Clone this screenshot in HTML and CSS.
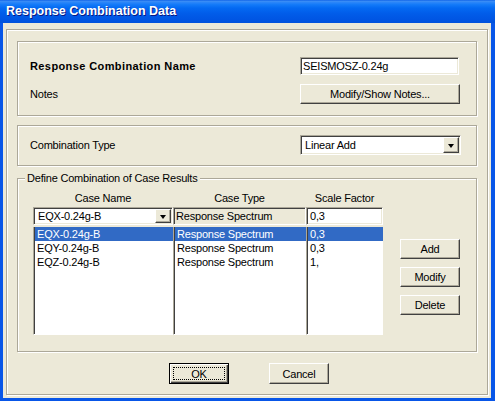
FILE: index.html
```html
<!DOCTYPE html>
<html>
<head>
    <meta charset="UTF-8">
    <title>Response Combination Data</title>
    <link rel="stylesheet" href="styles.css">
</head>
<body>
<div class="window">
    <div class="titlebar">Response Combination Data</div>
    <div class="client">
        <div class="frame">

            <!-- name + notes -->
            <div class="group group_name">
                <div class="row">
                    <span class="label bold">Response Combination Name</span>
                    <div class="field name_field">SEISMOSZ-0.24g</div>
                </div>
                <div class="row">
                    <span class="label">Notes</span>
                    <button class="btn notes_btn">Modify/Show Notes...</button>
                </div>
            </div>

            <!-- combination type -->
            <div class="group group_type">
                <div class="row">
                    <span class="label">Combination Type</span>
                    <div class="field combo type_combo">
                        <span class="combo_text">Linear Add</span>
                        <span class="arrow_btn"><span class="arrow"></span></span>
                    </div>
                </div>
            </div>

            <!-- case results -->
            <div class="group group_cases">
                <div class="legend">Define Combination of Case Results</div>
                <div class="cases_body">
                    <div class="case_table">
                        <div class="head">Case Name</div>
                        <div class="head">Case Type</div>
                        <div class="head">Scale Factor</div>

                        <div class="field combo case_combo">
                            <span class="combo_text">EQX-0.24g-B</span>
                            <span class="arrow_btn"><span class="arrow"></span></span>
                        </div>
                        <div class="field readonly">Response Spectrum</div>
                        <div class="field scale_field">0,3</div>

                        <ul class="listbox">
                            <li class="selected">EQX-0.24g-B</li>
                            <li>EQY-0.24g-B</li>
                            <li>EQZ-0.24g-B</li>
                        </ul>
                        <ul class="listbox">
                            <li class="selected">Response Spectrum</li>
                            <li>Response Spectrum</li>
                            <li>Response Spectrum</li>
                        </ul>
                        <ul class="listbox">
                            <li class="selected">0,3</li>
                            <li>0,3</li>
                            <li>1,</li>
                        </ul>
                    </div>
                    <div class="side_buttons">
                        <button class="btn">Add</button>
                        <button class="btn">Modify</button>
                        <button class="btn">Delete</button>
                    </div>
                </div>
            </div>

            <div class="actions">
                <button class="btn default">OK</button>
                <button class="btn">Cancel</button>
            </div>
        </div>
    </div>
</div>
</body>
</html>
```

FILE: styles.css
```css
*, *::before, *::after {
    margin: 0;
    padding: 0;
    box-sizing: border-box;
}

:root {
    --clr-face: #ECE9D8;
    --clr-shadow: #ACA899;
    --clr-dark: #404040;
    --clr-select: #316AC5;
}

body {
    font-family: "Liberation Sans", Arial, sans-serif;
    font-size: 11px;
    letter-spacing: -0.2px;
    color: #000;
    background-color: #0856E8;
}

.window {
    width: 495px;
    height: 401px;
    display: flex;
    flex-direction: column;
    background-color: #0856E8;
}

.titlebar {
    height: 23px;
    line-height: 23px;
    padding-left: 6px;
    color: white;
    font-weight: bold;
    font-size: 12.5px;
    letter-spacing: 0;
    text-shadow: 1px 1px #0A1883;
    background: linear-gradient(#0A5EE6 0%, #3D8EF5 5%, #2C86F8 10%, #137AF9 20%, #0469F2 35%, #015CE9 60%, #0055E3 85%, #0052DC 100%);
}

.client {
    flex: 1;
    margin: 0 4px 3px 3px;
    padding: 6px 3px 3px 3px;
    background-color: var(--clr-face);
}

.frame {
    height: 100%;
    padding: 11px 10px 0;
    border: 1px solid var(--clr-shadow);
    box-shadow: inset 1px 1px #fff, 1px 1px #fff;
}

/* etched group boxes */
.group {
    border: 1px solid var(--clr-shadow);
    box-shadow: inset 1px 1px #fff, 1px 1px #fff;
}

.group_name {
    padding: 15px 16px 11px 12px;
    display: flex;
    flex-direction: column;
    gap: 9px;
}

.group_type {
    margin-top: 9px;
    padding: 9px 15px 10px 12px;
}

.row {
    display: flex;
    align-items: center;
    justify-content: space-between;
}

.label {
    line-height: 13px;
}

.bold {
    font-weight: bold;
    letter-spacing: .4px;
}

/* sunken fields */
.field {
    height: 18px;
    line-height: 14px;
    padding: 1px 0 0 3px;
    background-color: white;
    border: 1px solid;
    border-color: var(--clr-shadow) #fff #fff var(--clr-shadow);
    box-shadow: inset 1px 1px var(--clr-dark), inset -1px -1px var(--clr-face);
    white-space: nowrap;
    overflow: hidden;
}

.name_field {
    width: 159px;
    margin-right: 1px;
    padding-left: 2px;
}

.combo {
    display: flex;
    align-items: stretch;
    padding: 1px 1px 1px 3px;
}

.combo_text {
    flex: 1;
    line-height: 14px;
}

.type_combo {
    width: 161px;
    height: 20px;
}

.type_combo .combo_text {
    line-height: 16px;
    padding-left: 1px;
}

.arrow_btn {
    width: 16px;
    display: flex;
    align-items: center;
    justify-content: center;
    background-color: var(--clr-face);
    border: 1px solid;
    border-color: #fff var(--clr-dark) var(--clr-dark) #fff;
    box-shadow: inset -1px -1px var(--clr-shadow);
}

.arrow {
    width: 0;
    height: 0;
    border-left: 3.5px solid transparent;
    border-right: 3.5px solid transparent;
    border-top: 4px solid #000;
    margin-top: 1px;
}

/* raised buttons */
.btn {
    font-family: inherit;
    font-size: 11px;
    letter-spacing: inherit;
    color: #000;
    background-color: var(--clr-face);
    border: 1px solid;
    border-color: #fff var(--clr-dark) var(--clr-dark) #fff;
    box-shadow: inset -1px -1px var(--clr-shadow);
    width: 60px;
    height: 20px;
}

.notes_btn {
    width: 160px;
}

.btn.default {
    border-color: #000;
    box-shadow: inset 1px 1px #fff, inset -1px -1px var(--clr-dark), inset -2px -2px var(--clr-shadow);
    outline: 1px dotted #000;
    outline-offset: -5px;
}

/* case results */
.group_cases {
    margin-top: 12px;
    padding: 0 15px 16px 15px;
}

.legend {
    width: fit-content;
    margin: -7px 0 0 -8px;
    padding: 0 2px;
    line-height: 13px;
    background-color: var(--clr-face);
}

.cases_body {
    margin-top: 7px;
    display: flex;
    gap: 17px;
}

.case_table {
    display: grid;
    grid-template-columns: 140px 133px 77px;
    grid-template-rows: 13px 18px 108px;
    row-gap: 2px;
}

.head {
    text-align: center;
    line-height: 13px;
}

.case_combo .combo_text {
    padding-left: 1px;
}

.readonly {
    background-color: var(--clr-face);
    padding-left: 2px;
}

.scale_field {
    padding-left: 3px;
}

.listbox {
    list-style: none;
    background-color: white;
    padding-left: 1px;
    border-left: 1px solid var(--clr-shadow);
    border-bottom: 1px solid #fff;
    box-shadow: inset 1px 0 var(--clr-dark);
}

.listbox li {
    height: 14px;
    line-height: 14px;
    padding-left: 2px;
    white-space: nowrap;
}

.listbox li.selected {
    background-color: var(--clr-select);
    color: white;
}

.side_buttons {
    padding-top: 47px;
    display: flex;
    flex-direction: column;
    gap: 8px;
}

.actions {
    margin-top: 11px;
    padding-left: 4px;
    display: flex;
    justify-content: center;
    gap: 40px;
}

.actions .btn {
    height: 21px;
}
```
